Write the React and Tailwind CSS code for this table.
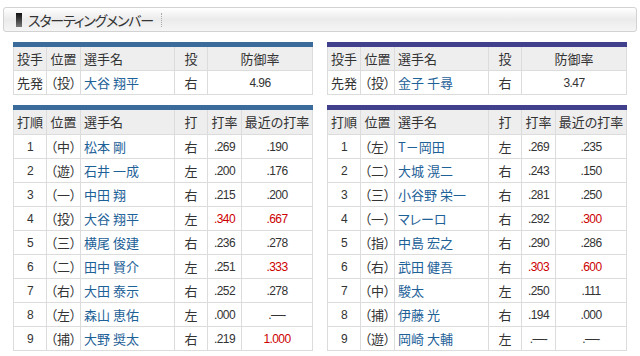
import React from "react";

const JP = "font-['Noto_Sans_CJK_JP',sans-serif] [font-feature-settings:'palt']";
const NUM = "font-['Liberation_Sans',sans-serif] text-[12px] tracking-[-0.6px]";

const leftBat = [
  ["1", "（中）", "松本 剛", "右", ".269", ".190"],
  ["2", "（遊）", "石井 一成", "左", ".200", ".176"],
  ["3", "（一）", "中田 翔", "右", ".215", ".200"],
  ["4", "（投）", "大谷 翔平", "左", ".340!", ".667!"],
  ["5", "（三）", "横尾 俊建", "右", ".236", ".278"],
  ["6", "（二）", "田中 賢介", "左", ".251", ".333!"],
  ["7", "（右）", "大田 泰示", "右", ".252", ".278"],
  ["8", "（左）", "森山 恵佑", "左", ".000", ".—-"],
  ["9", "（捕）", "大野 奨太", "右", ".219", "1.000!"],
];

const rightBat = [
  ["1", "（左）", "T－岡田", "左", ".269", ".235"],
  ["2", "（二）", "大城 滉二", "右", ".243", ".150"],
  ["3", "（三）", "小谷野 栄一", "右", ".281", ".250"],
  ["4", "（一）", "マレーロ", "右", ".292", ".300!"],
  ["5", "（指）", "中島 宏之", "右", ".290", ".286"],
  ["6", "（右）", "武田 健吾", "右", ".303!", ".600!"],
  ["7", "（中）", "駿太", "左", ".250", ".111"],
  ["8", "（捕）", "伊藤 光", "右", ".194", ".000"],
  ["9", "（遊）", "岡崎 大輔", "左", ".—-", ".—-"],
];

function Num({ v }) {
  const red = v.endsWith("!");
  const t = red ? v.slice(0, -1) : v;
  return <span className={`${NUM} ${red ? "text-[#cc0000]" : "text-[#333]"}`}>{t}</span>;
}

const cellC = "flex items-center justify-center border-r border-[#dcdcdc] overflow-visible whitespace-nowrap";
const cellL = "flex items-center justify-start pl-[3px] border-r border-[#dcdcdc] whitespace-nowrap";

function PitcherTable({ bar, name, era }) {
  return (
    <div className={`w-[300px] border-t-[5px] ${bar}`}>
      <div className="flex h-[24px] border-l border-b border-[#dcdcdc] bg-[#eeeeee] text-[13px] text-[#333]">
        <div className={`${cellC} w-[33px]`}>投手</div>
        <div className={`${cellC} w-[34px]`}>位置</div>
        <div className={`${cellL} w-[94px]`}>選手名</div>
        <div className={`${cellC} w-[33px]`}>投</div>
        <div className={`${cellC} flex-1`}>防御率</div>
      </div>
      <div className="flex h-[24px] border-l border-b border-[#dcdcdc] bg-white text-[13px] text-[#333]">
        <div className={`${cellC} w-[33px]`}>先発</div>
        <div className={`${cellC} w-[34px]`}>（投）</div>
        <div className={`${cellL} w-[94px] text-[#1d6197]`}>{name}</div>
        <div className={`${cellC} w-[33px]`}>右</div>
        <div className={`${cellC} flex-1`}><Num v={era} /></div>
      </div>
    </div>
  );
}

function BatTable({ bar, rows }) {
  return (
    <div className={`w-[300px] border-t-[5px] ${bar}`}>
      <div className="flex h-[25px] border-l border-b border-[#dcdcdc] bg-[#eeeeee] text-[13px] text-[#333]">
        <div className={`${cellC} w-[33px]`}>打順</div>
        <div className={`${cellC} w-[34px]`}>位置</div>
        <div className={`${cellL} w-[94px]`}>選手名</div>
        <div className={`${cellC} w-[33px]`}>打</div>
        <div className={`${cellC} w-[34px]`}>打率</div>
        <div className={`${cellC} flex-1`}>最近の打率</div>
      </div>
      {rows.map((r) => (
        <div key={r[0]} className="flex h-[24px] border-l border-b border-[#dcdcdc] bg-white text-[13px] text-[#333]">
          <div className={`${cellC} w-[33px]`}><span className={NUM}>{r[0]}</span></div>
          <div className={`${cellC} w-[34px]`}>{r[1]}</div>
          <div className={`${cellL} w-[94px] text-[#1d6197]`}>{r[2]}</div>
          <div className={`${cellC} w-[33px]`}>{r[3]}</div>
          <div className={`${cellC} w-[34px]`}><Num v={r[4]} /></div>
          <div className={`${cellC} flex-1`}><Num v={r[5]} /></div>
        </div>
      ))}
    </div>
  );
}

export default function App() {
  return (
    <div className={`w-[640px] h-[356px] bg-white overflow-hidden ${JP}`}>
      <div className="pt-[7px] pl-[3px]">
        <div className="w-[634px] h-[25px] border border-[#d2d2d2] rounded-[3px] bg-gradient-to-b from-white via-[#ebebeb] to-[#f5f5f5] flex items-center">
          <div className="ml-[12px] w-[6px] h-[14px] bg-gradient-to-b from-[#111] to-[#7a7a7a]" />
          <span className="ml-[6px] text-[14px] tracking-[-1.2px] leading-none text-[#333]">スターティングメンバー</span>
          <div className="ml-[8px] h-[14px] border-l border-dotted border-[#aaa]" />
        </div>
      </div>
      <div className="flex gap-[14px] pl-[13px] mt-[10px]">
        <div className="flex flex-col gap-[10px]">
          <PitcherTable bar="border-[#3a6b9b]" name="大谷 翔平" era="4.96" />
          <BatTable bar="border-[#3a6b9b]" rows={leftBat} />
        </div>
        <div className="flex flex-col gap-[10px]">
          <PitcherTable bar="border-[#40408c]" name="金子 千尋" era="3.47" />
          <BatTable bar="border-[#40408c]" rows={rightBat} />
        </div>
      </div>
    </div>
  );
}
